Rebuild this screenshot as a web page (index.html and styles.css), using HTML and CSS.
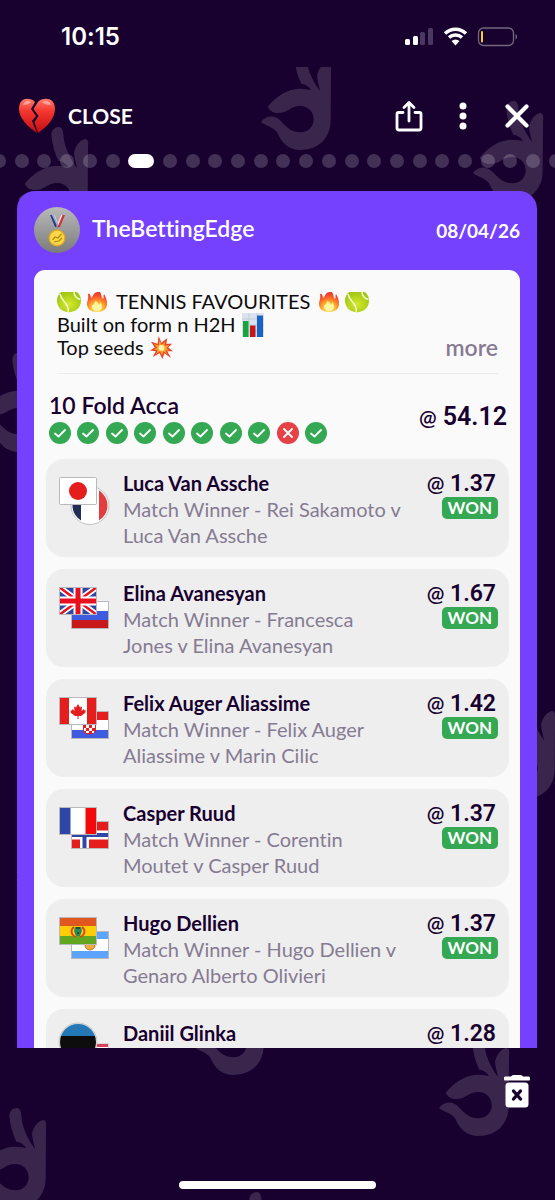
FILE: index.html
```html
<!DOCTYPE html>
<html lang="en">
<head>
<meta charset="utf-8">
<meta name="viewport" content="width=device-width, initial-scale=1">
<title>TheBettingEdge – 10 Fold Acca</title>
<link rel="stylesheet" href="styles.css">
</head>
<body>
<svg class="defs" aria-hidden="true">
  <defs>
    <path id="hand" transform="scale(.33333)" d="M83 140C105 114 138 86 180 86C196 86 206 89 213 90C208 80 198 73 184 71C172 48 166 20 163 -5C163 -22 175 -31 187 -30C196 -28 198 -18 199 -8C201 25 215 60 240 93C236 72 228 50 233 40C238 22 252 8 264 6C274 8 275 16 273 30L272 180C272 235 235 270 180 270C150 270 125 250 112 218C100 200 80 200 63 186C72 172 92 166 106 172C130 182 140 217 182 217C205 217 221 200 221 178C221 155 204 138 181 138C150 138 145 159 113 159C98 159 88 150 83 140Z"/>
    <linearGradient id="gHeart" x1="0" y1="0" x2="0" y2="1"><stop offset="0" stop-color="#ff7a6b"/><stop offset=".35" stop-color="#f5382f"/><stop offset="1" stop-color="#c40d12"/></linearGradient>
    <linearGradient id="gAvatar" x1="0" y1="0" x2="0" y2="1"><stop offset="0" stop-color="#b9b9b9"/><stop offset="1" stop-color="#7b7b7b"/></linearGradient>
    <radialGradient id="gBall" cx=".5" cy=".6" r=".6"><stop offset="0" stop-color="#d3ea2c"/><stop offset="1" stop-color="#a2c613"/></radialGradient>
    <radialGradient id="gFire" cx=".5" cy=".85" r=".8"><stop offset="0" stop-color="#fff27a"/><stop offset=".4" stop-color="#ffb52e"/><stop offset=".8" stop-color="#f9542b"/><stop offset="1" stop-color="#ef3b2c"/></radialGradient>
    <symbol id="ball" viewBox="0 0 24 23"><path d="M4 2H20C25.500 7 25 14 21 18.500C16 23.500 8 23.500 3 18.500C-1 14 -1.500 7 4 2Z" fill="url(#gBall)"/><path d="M3 4C4 9 7 11 9 14S12 19 11 22M17 2C17 6 20 9 23.500 9.500" fill="none" stroke="#f4f9d8" stroke-width="1.500"/></symbol>
    <symbol id="fire" viewBox="0 0 22 23"><path d="M2 4C3 3 5 5 5 8C7 7 7 3 11 2H14C16 5 15 7 17 9C18 8 17 6 18 4C20 7 21 10 21 14C21 19 17 22 11 22S1 19 1 14C1 11 3 9 2 4Z" fill="url(#gFire)"/><path d="M6 17C6 14 9 15 9 11C12 12 12 14 13 15C14 14 14 12 14 12C17 15 17 21 11 21C8 21 6 19 6 17Z" fill="#fff6a0"/></symbol>
    <symbol id="tick" viewBox="0 0 22 22"><circle cx="11" cy="11" r="11" fill="#34a853"/><path d="M6 11.500L9.500 14.500L16 8" fill="none" stroke="#fff" stroke-width="1.800" stroke-linecap="round" stroke-linejoin="round"/></symbol>
    <symbol id="cross" viewBox="0 0 22 22"><circle cx="11" cy="11" r="11" fill="#e64146"/><path d="M7 7L15 15M15 7L7 15" fill="none" stroke="#fff" stroke-width="1.800" stroke-linecap="round"/></symbol>
  </defs>
</svg>

<svg class="backdrop" aria-hidden="true">
  <g fill="#3a264d">
    <use href="#hand" transform="translate(240 -7)"/>
    <use href="#hand" transform="translate(-3 70)"/>
    <use href="#hand" transform="translate(452 44)"/>
    <use href="#hand" transform="translate(-42 295)"/>
    <use href="#hand" transform="translate(464 642)"/>
    <use href="#hand" transform="translate(-5 751)"/>
    <use href="#hand" transform="translate(173 918)"/>
    <use href="#hand" transform="translate(418 979)"/>
    <use href="#hand" transform="translate(-45 1051)"/>
    <use href="#hand" transform="translate(195 1135)"/>
  </g>
</svg>

<div class="screen">
  <div class="status">
    <span class="status-time">10:15</span>
    <svg class="status-icons" width="113" height="22" viewBox="0 0 113 22" role="img" aria-label="Signal, Wi-Fi and battery">
      <g fill="#fff"><rect x="0" y="13" width="5" height="6" rx="1.500"/><rect x="8" y="10" width="5" height="9" rx="1.500"/></g>
      <g fill="#4b3860"><rect x="15" y="6" width="5" height="13" rx="1.500"/><rect x="23" y="2" width="5" height="17" rx="1.500"/></g>
      <path d="M40 7.500A15 15 0 0 1 61 7.500M44 11.500A9.500 9.500 0 0 1 57 11.500" fill="none" stroke="#fff" stroke-width="3.400"/>
      <path d="M46.500 15A6 6 0 0 1 54.500 15L50.500 19.500Z" fill="#fff"/>
      <rect x="73.500" y="2" width="35" height="17.500" rx="5" fill="none" stroke="#75677f" stroke-width="1.300"/>
      <rect x="76" y="5" width="2" height="11.500" rx="1" fill="#f0cf2e"/>
      <path d="M110.500 8C112.500 9 112.500 12.500 110.500 13.500Z" fill="#75677f"/>
    </svg>
  </div>

  <header class="topbar">
    <div class="topbar-title">
      <svg width="38" height="37" viewBox="0 0 38 37" role="img" aria-label="Broken heart">
        <path d="M17 5C12 0 1 0 1 12C1 21 10 30 19 36L14 24L18 19L13 12Z" fill="url(#gHeart)"/>
        <path d="M20 5C25 0 37 0 37 12C37 21 29 30 20 36L16.500 25L20.500 19L15.500 12Z" fill="url(#gHeart)"/>
        <path d="M5 8C6 4 10 3 13 5C12 7 9 8 5 8ZM24 5C28 3 32 4 33 8C29 8 26 7 24 5Z" fill="#fff" opacity=".4"/>
      </svg>
      <h1>CLOSE</h1>
    </div>
    <div class="topbar-actions">
      <button type="button" aria-label="Share">
        <svg width="28" height="32" viewBox="0 0 28 32" fill="none" stroke="#fff" stroke-width="2.800" stroke-linecap="round" stroke-linejoin="round"><path d="M8 12.500H3.500C2.500 12.500 2 13 2 14V28C2 29.500 2.500 30 4 30H24C25.500 30 26 29.500 26 28V14C26 13 25.500 12.500 24.500 12.500H20M14 21V3M9 7.500L14 2.500L19 7.500"/></svg>
      </button>
      <button type="button" aria-label="More options">
        <svg width="28" height="32" viewBox="0 0 28 32" fill="#fff"><circle cx="14" cy="6" r="3.500"/><circle cx="14" cy="16" r="3.500"/><circle cx="14" cy="26" r="3.500"/></svg>
      </button>
      <button type="button" aria-label="Close">
        <svg width="28" height="32" viewBox="0 0 28 32" stroke="#fff" stroke-width="4.200" stroke-linecap="round"><path d="M4.500 6.500L23.500 25.500M23.500 6.500L4.500 25.500"/></svg>
      </button>
    </div>
  </header>

  <div class="pager" role="img" aria-label="Page 7 of 25">
    <i></i><i></i><i></i><i></i><i></i><i></i><i class="current"></i><i></i><i></i><i></i><i></i><i></i><i></i><i></i><i></i><i></i><i></i><i></i><i></i><i></i><i></i><i></i><i></i><i></i><i></i>
  </div>

  <main class="scroller">
    <article class="post">
      <header class="post-head">
        <svg width="46" height="46" viewBox="0 0 46 46" role="img" aria-label="Medal">
          <circle cx="23" cy="23" r="23" fill="url(#gAvatar)"/>
          <path d="M16 8H20L25 20H21Z" fill="#27408f"/><path d="M18 8H20.500L25 19L23.500 20Z" fill="#f3f3f3"/>
          <path d="M31 8H27L22 20H26Z" fill="#d2353a"/><path d="M28.500 8H27L22.500 19L23.500 20Z" fill="#f3f3f3"/><path d="M20 8L25 20L23.500 21L18 8Z" fill="#27408f" opacity=".4"/>
          <circle cx="23" cy="31" r="8.500" fill="#e0a91d"/><circle cx="23" cy="31" r="7.200" fill="#f9d84a"/>
          <path d="M18.500 33L21 30L24 31L27.500 27M20 35L25 34L28 31" fill="none" stroke="#b98509" stroke-width="1.200"/>
        </svg>
        <h2>TheBettingEdge</h2>
        <time datetime="2026-04-08">08/04/26</time>
      </header>

      <section class="slip">
        <div class="caption">
          <p>
            <span class="line first"><svg width="24" height="23" role="img" aria-label="Tennis ball"><use href="#ball"/></svg><svg width="22" height="23" role="img" aria-label="Fire"><use href="#fire"/></svg><span class="words">TENNIS FAVOURITES</span><svg width="22" height="23" role="img" aria-label="Fire"><use href="#fire"/></svg><svg width="24" height="23" role="img" aria-label="Tennis ball"><use href="#ball"/></svg></span>
            <span class="line">Built on form n H2H
              <svg width="22" height="24" viewBox="0 0 22 24" role="img" aria-label="Bar chart"><path d="M0 0H22V24H0Z" fill="#d9e2ee"/><path d="M0 6H22M0 12H22M0 18H22M7 0V24M15 0V24" stroke="#bccbdd" stroke-width=".8"/><path d="M1 8H6.500V24H1Z" fill="#16a53a"/><path d="M8 12.500H13.500V24H8Z" fill="#c5161d"/><path d="M15 2.500H21V24H15Z" fill="#1a62c4"/></svg></span>
            <span class="line">Top seeds
              <svg width="23" height="23" viewBox="0 0 24 24" role="img" aria-label="Collision"><path d="M9 0L12 7L18 2L17 8L23 8L19 12L24 16L18 16L22 23L15 18L13 24L10 18L3 22L6 16L0 15L5 12L1 6L8 8Z" fill="#e8432a"/><path d="M10 4L12 9L16 6L15 10L20 10L17 12.500L20 15L16 15L18 19L14 16L12.500 20L10.500 16L6 19L8 15L4 14L7.500 12L4 8L9 10Z" fill="#fba52b"/><circle cx="12" cy="12.500" r="3" fill="#fff2b0"/></svg></span>
          </p>
          <button type="button" class="more">more</button>
        </div>

        <div class="summary">
          <div>
            <h3>10 Fold Acca</h3>
            <div class="results" role="img" aria-label="9 won, 1 lost">
              <svg><use href="#tick"/></svg><svg><use href="#tick"/></svg><svg><use href="#tick"/></svg><svg><use href="#tick"/></svg><svg><use href="#tick"/></svg><svg><use href="#tick"/></svg><svg><use href="#tick"/></svg><svg><use href="#tick"/></svg><svg><use href="#cross"/></svg><svg><use href="#tick"/></svg>
            </div>
          </div>
          <p class="total"><span>@</span> 54.12</p>
        </div>

        <ul class="legs">
          <li>
            <svg class="flags" viewBox="0 0 53 56" aria-hidden="true">
              <clipPath id="cf"><circle cx="33" cy="34.500" r="17.500"/></clipPath>
              <circle cx="33" cy="34.500" r="19" fill="#fff" stroke="#c2c2c2"/>
              <g clip-path="url(#cf)"><path d="M14 15H24V56H14Z" fill="#222c55"/><path d="M42 15H53V56H42Z" fill="#e23e3e"/></g>
              <rect x="2.500" y="6.500" width="37" height="27" rx="1" fill="#fff" stroke="#b9b9bd"/><circle cx="21" cy="20" r="9" fill="#e51d1d"/>
            </svg>
            <div class="leg"><h4>Luca Van Assche</h4><p>Match Winner - Rei Sakamoto v<br>Luca Van Assche</p></div>
            <div class="odds"><p><span>@</span> 1.37</p><strong>WON</strong></div>
          </li>
          <li>
            <svg class="flags" viewBox="0 0 53 56" aria-hidden="true">
              <path d="M14 20H51V30H14Z" fill="#fff"/><path d="M14 30H51V39H14Z" fill="#3f5be0"/><path d="M14 39H51V48H14Z" fill="#c81a1a"/><rect x="14.500" y="20.500" width="37" height="27" fill="none" stroke="#b9b9bd"/>
              <svg x="2" y="6" width="38" height="28" viewBox="0 0 38 28"><path d="M0 0H38V28H0Z" fill="#2e46a6"/><path d="M0 0L38 28M38 0L0 28" stroke="#fff" stroke-width="6"/><path d="M0 0L38 28M38 0L0 28" stroke="#e8101c" stroke-width="2.500"/><path d="M19 0V28M0 14H38" stroke="#fff" stroke-width="9"/><path d="M19 0V28M0 14H38" stroke="#e8101c" stroke-width="5"/><rect x=".5" y=".5" width="37" height="27" fill="none" stroke="#b9b9bd"/></svg>
            </svg>
            <div class="leg"><h4>Elina Avanesyan</h4><p>Match Winner - Francesca<br>Jones v Elina Avanesyan</p></div>
            <div class="odds"><p><span>@</span> 1.67</p><strong>WON</strong></div>
          </li>
          <li>
            <svg class="flags" viewBox="0 0 53 56" aria-hidden="true">
              <path d="M14 20H51V30H14Z" fill="#e51d1d"/><path d="M14 29H51V39H14Z" fill="#fff"/><path d="M14 39H51V48H14Z" fill="#3f5be0"/>
              <path d="M26 28H39V38C39 45 26 45 26 38Z" fill="#e51d1d"/><path d="M29 34H32V37H29ZM35 34H38V37H35ZM32 37H35V40H32ZM27 37H29V40H27ZM29 40H32V42H29ZM35 40H37V42H35Z" fill="#fff"/><rect x="14.500" y="20.500" width="37" height="27" fill="none" stroke="#b9b9bd"/>
              <rect x="2" y="6" width="38" height="28" fill="#fff"/><path d="M2 6H12V34H2ZM30 6H40V34H30Z" fill="#e51d1d"/>
              <path d="M21 13L23 16.500L25 15.500L24.500 20L27 18L27.500 19.500L29 19.500L28 22L24 25H21.500V28H20.500V25H18L14 22L13.500 19.500L15 19.500L15.500 18L17.500 20L17 15.500L19 16.500Z" fill="#e51d1d"/><rect x="2.500" y="6.500" width="37" height="27" fill="none" stroke="#b9b9bd"/>
            </svg>
            <div class="leg"><h4>Felix Auger Aliassime</h4><p>Match Winner - Felix Auger<br>Aliassime v Marin Cilic</p></div>
            <div class="odds"><p><span>@</span> 1.42</p><strong>WON</strong></div>
          </li>
          <li>
            <svg class="flags" viewBox="0 0 53 56" aria-hidden="true">
              <rect x="14" y="20" width="38" height="28" fill="#e51d1d"/><path d="M27.500 20V48M14 34H52" stroke="#fff" stroke-width="9"/><path d="M27.500 20V48M14 34H52" stroke="#2e46a6" stroke-width="4"/><rect x="14.500" y="20.500" width="37" height="27" fill="none" stroke="#b9b9bd"/>
              <rect x="2" y="6" width="38" height="28" fill="#fff"/><path d="M2 6H13.500V34H2Z" fill="#2e46a6"/><path d="M28.500 6H40V34H28.500Z" fill="#f20a0a"/><rect x="2.500" y="6.500" width="37" height="27" fill="none" stroke="#b9b9bd"/>
            </svg>
            <div class="leg"><h4>Casper Ruud</h4><p>Match Winner - Corentin<br>Moutet v Casper Ruud</p></div>
            <div class="odds"><p><span>@</span> 1.37</p><strong>WON</strong></div>
          </li>
          <li>
            <svg class="flags" viewBox="0 0 53 56" aria-hidden="true">
              <rect x="14" y="20" width="38" height="28" fill="#5da4ff"/><path d="M14 28H52V40H14Z" fill="#fff"/><circle cx="33" cy="34" r="5" fill="#f2a93c" stroke="#b8752c"/><rect x="14.500" y="20.500" width="37" height="27" fill="none" stroke="#b9b9bd"/>
              <path d="M2 6H40V16H2Z" fill="#e2561f"/><path d="M2 15H40V25H2Z" fill="#ffcd05"/><path d="M2 25H40V34H2Z" fill="#62a61f"/>
              <path d="M17 16C13 19 14 24 19 26M25 16C29 19 28 24 23 26" fill="none" stroke="#d8431f" stroke-width="1.800"/><path d="M18 16H24L25 20L23 25H19L17 20Z" fill="#2a8a5c"/><path d="M19 17H23M20 22H22" stroke="#26372d" stroke-width="1.500"/><rect x="2.500" y="6.500" width="37" height="27" fill="none" stroke="#b9b9bd"/>
            </svg>
            <div class="leg"><h4>Hugo Dellien</h4><p>Match Winner - Hugo Dellien v<br>Genaro Alberto Olivieri</p></div>
            <div class="odds"><p><span>@</span> 1.37</p><strong>WON</strong></div>
          </li>
          <li>
            <svg class="flags" viewBox="0 0 53 56" aria-hidden="true">
              <rect x="14.500" y="22.500" width="37" height="27" fill="#fff" stroke="#d5d5d8"/><path d="M15 23H51V26H15Z" fill="#d8415a"/>
              <clipPath id="ce"><circle cx="21" cy="21" r="18"/></clipPath>
              <circle cx="21" cy="21" r="19" fill="#e4e4e4" stroke="#c8c8c8"/>
              <g clip-path="url(#ce)"><path d="M0 0H42V15H0Z" fill="#2478b5"/><path d="M0 15H42V28H0Z" fill="#0d0d0d"/><path d="M0 28H42V40H0Z" fill="#fff"/></g>
            </svg>
            <div class="leg"><h4>Daniil Glinka</h4></div>
            <div class="odds"><p><span>@</span> 1.28</p></div>
          </li>
        </ul>
      </section>
    </article>
  </main>

  <footer class="footer">
    <button type="button" aria-label="Delete">
      <svg width="28" height="34" viewBox="0 0 28 34"><path d="M1 4C1 3 1.500 2.500 3 2.500H8C9 1 10 1 11 1H17C18 1 19 1 20 2.500H25C26.500 2.500 27 3 27 4V5C27 6 26.500 6.500 26 6.500H2C1.500 6.500 1 6 1 5Z" fill="#fff"/><rect x="2.500" y="8.500" width="23" height="25" rx="3.500" fill="#fff"/><path d="M10.500 17L17.500 25M17.500 17L10.500 25" stroke="#18002f" stroke-width="3.400" stroke-linecap="round"/></svg>
    </button>
    <div class="home-bar"></div>
  </footer>
</div>
</body>
</html>
```

FILE: styles.css
```css
* { box-sizing: border-box; margin: 0; padding: 0; }

body {
  background: #18002f;
  color: #18002f;
  font-family: Lato, "Open Sans", sans-serif;
  font-size: 20px;
  font-variant-ligatures: none;
}

svg { display: block; flex: none; }
button { display: block; border: 0; background: none; font: inherit; cursor: pointer; }
h1, h2, h3, h4 { font-weight: 600; }

.defs { position: absolute; width: 0; height: 0; }
.backdrop { position: absolute; top: 67px; left: 0; width: 100%; height: calc(100vh - 67px); }

.screen { position: relative; display: flex; flex-direction: column; height: 100vh; overflow: hidden; }

.status { display: flex; align-items: center; justify-content: space-between; padding: 22px 37px 15px 61px; color: #fff; }
.status-time { font-family: Inter, sans-serif; font-size: 24px; font-weight: 600; line-height: 30px; }

.topbar { display: flex; align-items: center; justify-content: space-between; padding: 30px 24px 20px 18px; }
.topbar-title { display: flex; align-items: center; gap: 12px; }
.topbar h1 { color: #fff; font-size: 21px; font-weight: 700; line-height: 36px; }
.topbar-actions { display: flex; gap: 26px; }

.pager { display: flex; align-items: center; justify-content: space-between; margin: 0 -8px; }
.pager i { flex: none; width: 14px; height: 14px; border-radius: 7px; background: rgba(255, 255, 255, .19); }
.pager .current { width: 26px; background: #fff; }

.scroller { flex: 1; min-height: 0; overflow: hidden; padding: 23px 18px 0 17px; }
.post { padding: 16px 17px 17px; border-radius: 18px; background: #7541ff; }
.post-head { display: flex; align-items: center; gap: 12px; padding-bottom: 17px; color: #fff; }
.post-head h2 { flex: 1; font-size: 23px; line-height: 28px; padding-bottom: 5px; }
.post-head time { font-size: 19px; font-weight: 700; }

.slip { padding: 20px 11px 20px 12px; border-radius: 11px; background: #fbfafb; }
.caption { display: flex; align-items: flex-end; justify-content: space-between; margin: 0 11px; padding-bottom: 14px; border-bottom: 1px solid #ececee; }
.caption p { color: #0c0c0c; line-height: 23px; }
.line { display: flex; align-items: center; gap: 6px; height: 23px; white-space: nowrap; }
.first { gap: 5px; }
.words { padding: 0 3px; }
.more { color: #857b92; font-size: 23px; font-weight: 600; line-height: 24px; }

.summary { display: flex; align-items: center; justify-content: space-between; padding: 16px 2px 15px 3px; }
.summary h3 { font-size: 23px; line-height: 30px; padding-bottom: 2px; }
.results { display: flex; justify-content: space-between; width: 278px; }
.results svg { width: 22px; height: 22px; }
.total, .odds p { font-family: Roboto, sans-serif; font-weight: 600; white-space: nowrap; }
.total { font-size: 25px; line-height: 30px; }
.total span, .odds span { font-family: Lato, sans-serif; font-weight: 600; font-size: 21px; }

.legs { display: grid; gap: 12px; list-style: none; }
.legs li { display: flex; align-items: flex-start; min-height: 98px; padding: 11px 11px 9px; border-radius: 18px; background: #eee; }
.flags { width: 53px; height: 56px; margin: 1px 13px 0 0; }
.leg { flex: 1; min-width: 0; line-height: 26px; }
.leg h4 { font-size: 20px; font-weight: 700; }
.leg p { color: #857b92; }
.odds { display: flex; flex-direction: column; align-items: flex-end; }
.odds p { font-size: 23px; line-height: 26px; padding-right: 2px; }
.odds strong { padding: 0 6px; border-radius: 5px; background: #34a853; color: #fff; font-size: 17px; font-weight: 700; line-height: 22px; }

.footer { display: flex; flex-direction: column; align-items: center; justify-content: space-between; padding: 26px 24px 11px; }
.footer button { align-self: flex-end; margin-bottom: 73px; }
.home-bar { width: 39%; height: 8px; border-radius: 4px; background: #fff; }
```
